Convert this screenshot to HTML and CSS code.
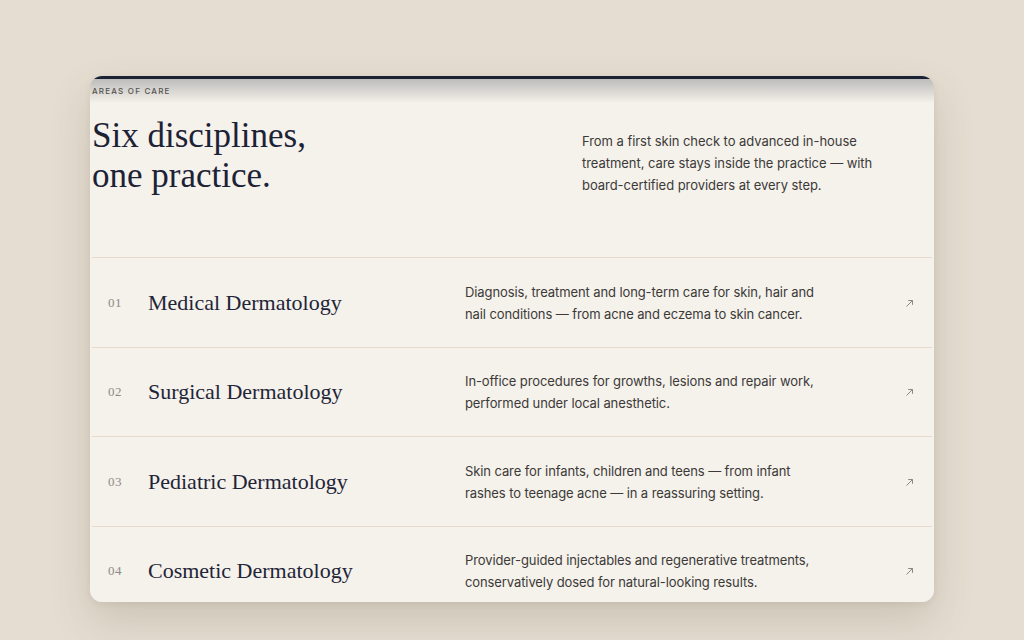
FILE: index.html
```html
<!DOCTYPE html>
<html lang="en">
<head>
<meta charset="utf-8">
<title>Areas of Care</title>
<link rel="stylesheet" href="styles.css">
</head>
<body>
<section class="card">
  <header class="intro">
    <div class="eyebrow">AREAS OF CARE</div>
    <div class="intro-grid">
      <h2 class="title">Six disciplines,<br>one practice.</h2>
      <p class="lede">From a first skin check to advanced in-house treatment, care stays inside the practice — with board-certified providers at every step.</p>
    </div>
  </header>
  <ul class="list">
    <li class="row">
      <span class="num">01</span>
      <span class="name">Medical Dermatology</span>
      <p class="desc">Diagnosis, treatment and long-term care for skin, hair and nail conditions — from acne and eczema to skin cancer.</p>
      <svg class="arrow" viewBox="0 0 9 9" width="9" height="9"><path d="M1.5 7.5 L7.5 1.5 M3.2 1.5 H7.5 V5.8" fill="none" stroke="#8a8784" stroke-width="1"/></svg>
    </li>
    <li class="row">
      <span class="num">02</span>
      <span class="name">Surgical Dermatology</span>
      <p class="desc">In-office procedures for growths, lesions and repair work, performed under local anesthetic.</p>
      <svg class="arrow" viewBox="0 0 9 9" width="9" height="9"><path d="M1.5 7.5 L7.5 1.5 M3.2 1.5 H7.5 V5.8" fill="none" stroke="#8a8784" stroke-width="1"/></svg>
    </li>
    <li class="row">
      <span class="num">03</span>
      <span class="name">Pediatric Dermatology</span>
      <p class="desc">Skin care for infants, children and teens — from infant rashes to teenage acne — in a reassuring setting.</p>
      <svg class="arrow" viewBox="0 0 9 9" width="9" height="9"><path d="M1.5 7.5 L7.5 1.5 M3.2 1.5 H7.5 V5.8" fill="none" stroke="#8a8784" stroke-width="1"/></svg>
    </li>
    <li class="row">
      <span class="num">04</span>
      <span class="name">Cosmetic Dermatology</span>
      <p class="desc">Provider-guided injectables and regenerative treatments, conservatively dosed for natural-looking results.</p>
      <svg class="arrow" viewBox="0 0 9 9" width="9" height="9"><path d="M1.5 7.5 L7.5 1.5 M3.2 1.5 H7.5 V5.8" fill="none" stroke="#8a8784" stroke-width="1"/></svg>
    </li>
  </ul>
</section>
</body>
</html>
```

FILE: styles.css
```css
* { box-sizing: border-box; }

html, body {
  margin: 0;
  height: 100%;
}

body {
  background: #e5ddd1;
  padding-top: 76px;
  font-family: Inter, "Noto Sans", sans-serif;
  overflow: hidden;
}

.card {
  width: 844px;
  height: 526px;
  margin: 0 auto;
  border-radius: 12px;
  overflow: hidden;
  padding: 0 2px;
  background:
    linear-gradient(to bottom, #1b2236 0, #1b2236 3px, #bdbcba 3px, #f5f1eb 27px, #f5f1eb 100%);
  box-shadow: 0 18px 40px rgba(90, 75, 55, 0.18), 0 2px 6px rgba(90, 75, 55, 0.08);
}

.intro {
  padding-top: 9px;
  padding-bottom: 61px;
}

.eyebrow {
  font-size: 8px;
  line-height: 12px;
  letter-spacing: 0.15em;
  color: #55534f;
  font-weight: 500;
}

.intro-grid {
  display: grid;
  grid-template-columns: 490px 1fr;
  margin-top: 19px;
}

.title {
  margin: 0;
  font-family: "Liberation Serif", "DejaVu Serif", serif;
  font-weight: 400;
  font-size: 35px;
  line-height: 40px;
  color: #1b2236;
}

.lede {
  margin: 14px 0 0;
  max-width: 300px;
  font-size: 13px;
  line-height: 22px;
  letter-spacing: -0.05px;
  color: #3b3a38;
}

.list {
  list-style: none;
  margin: 0;
  padding: 0;
}

.row {
  display: grid;
  grid-template-columns: 40px 317px 1fr auto;
  align-items: center;
  padding: 22.5px 18px 22px 16px;
  border-top: 1px solid #e8d9cb;
}

.num {
  font-family: "Liberation Serif", "DejaVu Serif", serif;
  font-size: 13px;
  color: #8d8a86;
  letter-spacing: 0.04em;
}

.name {
  font-family: "Liberation Serif", "DejaVu Serif", serif;
  font-size: 22px;
  color: #1f2538;
}

.desc {
  margin: 0;
  max-width: 365px;
  font-size: 13px;
  line-height: 22px;
  letter-spacing: -0.1px;
  color: #3b3a38;
}

.arrow {
  display: block;
  margin-top: 1px;
}
```
